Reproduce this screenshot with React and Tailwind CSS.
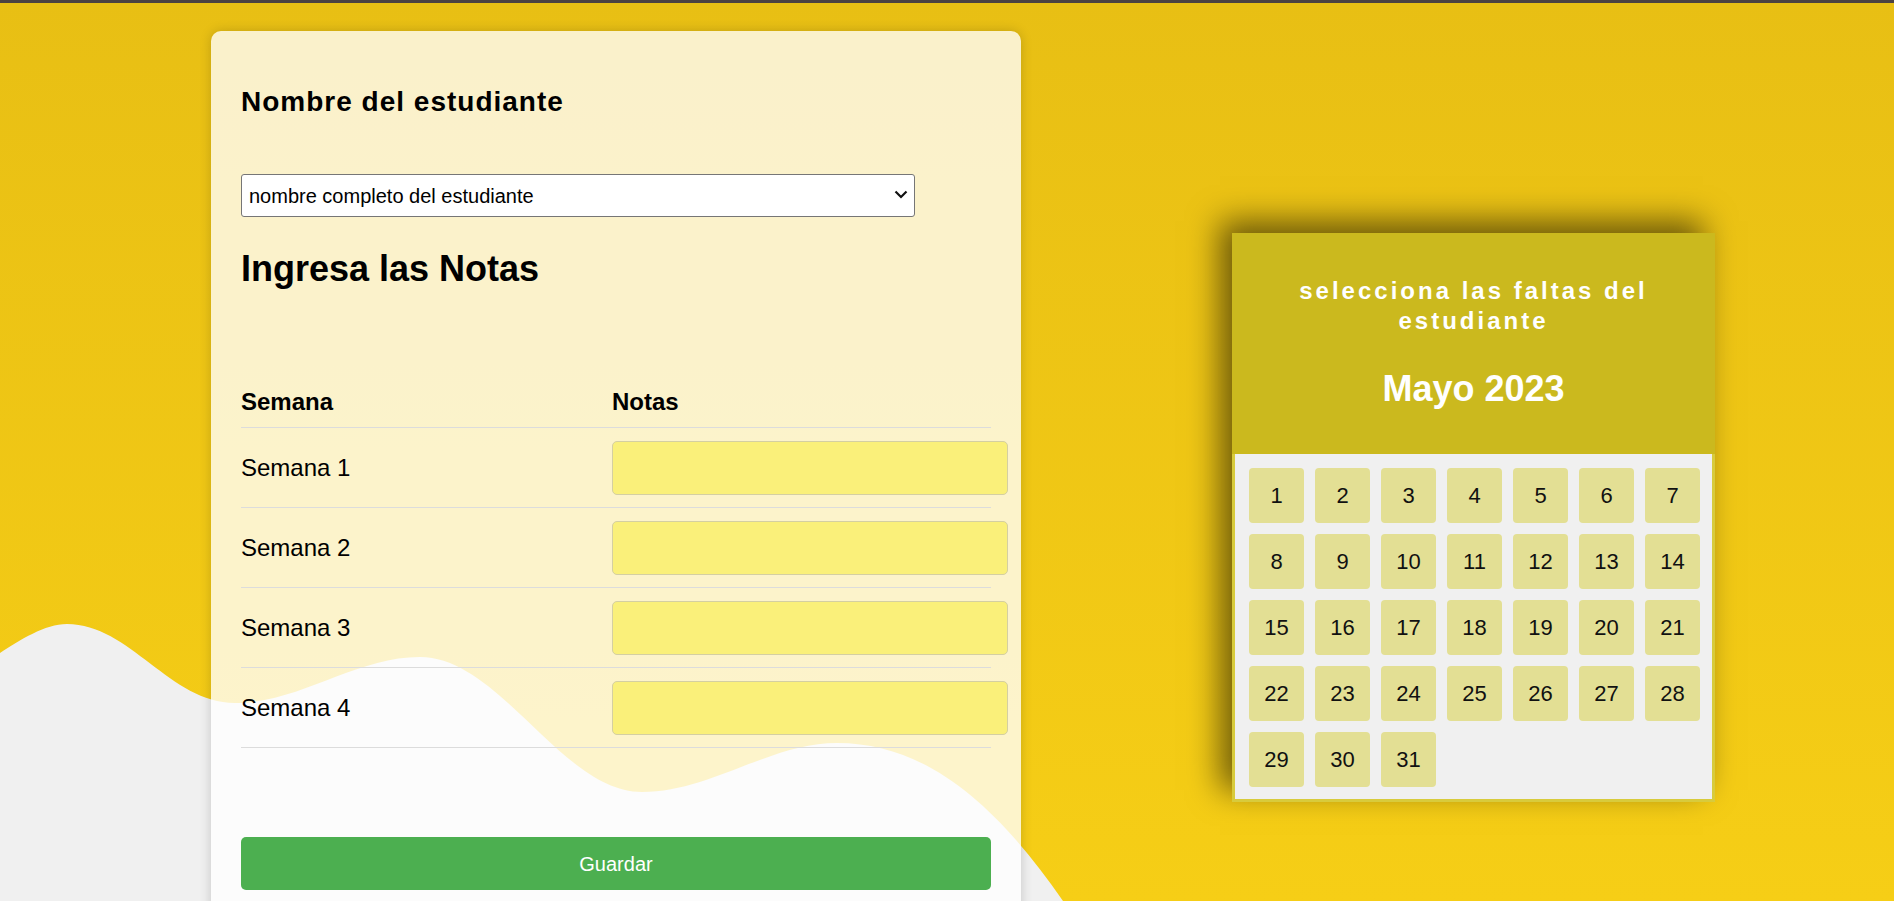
import React from 'react';

const WEEKS = ['Semana 1', 'Semana 2', 'Semana 3', 'Semana 4'];
const DAYS = Array.from({ length: 31 }, (_, i) => i + 1);

// background wave, sits under the card
function Wave() {
  return (
    <svg
      className="absolute left-0 top-0 w-[1894px] h-[901px] pointer-events-none"
      viewBox="0 0 1894 901"
      preserveAspectRatio="none"
    >
      <path
        d="M0,653 C20,640 45,624 67,624 C130,624 170,703 235,703 C300,703 355,657 420,657 C500,657 562,792 642,792 C710,792 770,743 837,743 C930,743 1000,810 1063,901 L1090,960 L0,960 Z"
        fill="#f0f0f0"
      />
    </svg>
  );
}

function Chevron() {
  return (
    <svg className="absolute right-[7px] top-[16px] pointer-events-none" width="14" height="9" viewBox="0 0 14 9">
      <path d="M1.5 1.5 L7 7 L12.5 1.5" fill="none" stroke="#111" strokeWidth="2.2" />
    </svg>
  );
}

function NotesForm() {
  return (
    <div className="w-[810px] h-[930px] shrink-0 rounded-[10px] bg-white/[0.78] px-[30px] pt-[54px] shadow-[0_0_12px_rgba(0,0,0,0.18)]">
      <h3 className="text-[28px] leading-[34px] font-bold tracking-[1px] text-black">Nombre del estudiante</h3>

      <div className="relative mt-[55px] w-[674px]">
        <select className="w-full h-[43px] appearance-none rounded-[3px] border border-[#767676] bg-white pl-[7px] text-[20px] text-black outline-none">
          <option>nombre completo del estudiante</option>
        </select>
        <Chevron />
      </div>

      <h2 className="mt-[30px] text-[36px] leading-[43px] font-bold text-black">Ingresa las Notas</h2>

      <div className="mt-[97px] w-[750px]">
        <div className="grid grid-cols-[371px_1fr] border-b border-[#dcdcdc] pb-[11px] text-[24px] leading-[29px] font-bold text-black">
          <span>Semana</span>
          <span>Notas</span>
        </div>
        {WEEKS.map((w) => (
          <div key={w} className="grid grid-cols-[371px_1fr] items-center h-[80px] border-b border-[#dcdcdc] text-[24px] text-black">
            <span>{w}</span>
            <input
              type="text"
              className="w-[396px] h-[54px] rounded-[5px] border border-[#d4cfa2] bg-[#faf07a] outline-none"
            />
          </div>
        ))}
      </div>

      <button className="mt-[89px] w-[750px] h-[53px] rounded-[5px] bg-[#4caf50] text-[20px] text-white">
        Guardar
      </button>
    </div>
  );
}

function Calendar() {
  return (
    <div className="ml-[211px] mt-[202px] w-[483px] shrink-0 bg-[#d8cb3c] shadow-[-12px_-12px_30px_rgba(0,0,0,0.55)]">
      <div className="bg-[#cbb91e] px-[40px] pt-[43px] pb-[44px] text-center font-bold text-white">
        <div className="text-[24px] leading-[30px] tracking-[3px]">selecciona las faltas del estudiante</div>
        <div className="mt-[31px] text-[36px] leading-[43px]">Mayo 2023</div>
      </div>
      <div className="mx-[3px] mb-[3px] grid grid-cols-[repeat(7,55px)] gap-[11px] bg-[#f0f0f0] pl-[14px] pr-[12px] pt-[14px] pb-[12px]">
        {DAYS.map((d) => (
          <div key={d} className="flex h-[55px] items-center justify-center rounded-[4px] bg-[#e3df94] text-[22px] text-[#111]">
            {d}
          </div>
        ))}
      </div>
    </div>
  );
}

export default function App() {
  return (
    <div className="relative h-[901px] w-full overflow-hidden bg-linear-to-b from-[#e8bf14] to-[#f6ce16] font-['Liberation_Sans',Arial,sans-serif]">
      <Wave />
      <div className="relative h-[3px] bg-[#4b4242]" />
      <div className="relative flex items-start pl-[211px] pt-[28px]">
        <NotesForm />
        <Calendar />
      </div>
    </div>
  );
}
